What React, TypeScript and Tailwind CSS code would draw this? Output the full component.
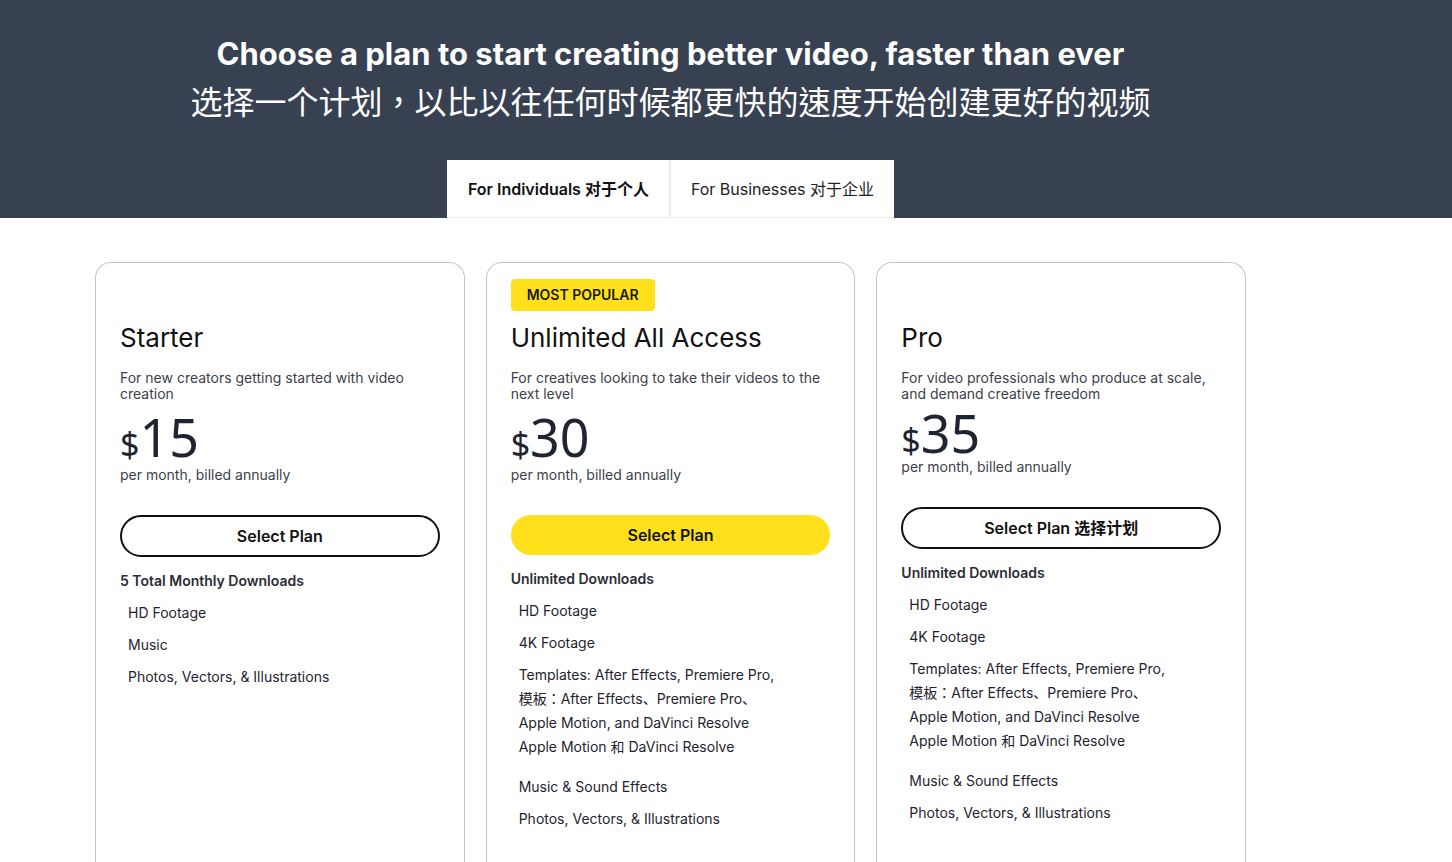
import React from "react";

type Plan = {
  name: string;
  description: string;
  price: string;
  badge?: string;
  buttonLabel: string;
  highlighted?: boolean;
  downloads: string;
  features: string[][];
};

const PLANS: Plan[] = [
  {
    name: "Starter",
    description: "For new creators getting started with video creation",
    price: "15",
    buttonLabel: "Select Plan",
    downloads: "5 Total Monthly Downloads",
    features: [["HD Footage"], ["Music"], ["Photos, Vectors, & Illustrations"]],
  },
  {
    name: "Unlimited All Access",
    description: "For creatives looking to take their videos to the next level",
    price: "30",
    badge: "MOST POPULAR",
    buttonLabel: "Select Plan",
    highlighted: true,
    downloads: "Unlimited Downloads",
    features: [
      ["HD Footage"],
      ["4K Footage"],
      [
        "Templates: After Effects, Premiere Pro,",
        "模板：After Effects、Premiere Pro、",
        "Apple Motion, and DaVinci Resolve",
        "Apple Motion 和 DaVinci Resolve",
      ],
      ["Music & Sound Effects"],
      ["Photos, Vectors, & Illustrations"],
    ],
  },
  {
    name: "Pro",
    description: "For video professionals who produce at scale, and demand creative freedom",
    price: "35",
    buttonLabel: "Select Plan 选择计划",
    downloads: "Unlimited Downloads",
    features: [
      ["HD Footage"],
      ["4K Footage"],
      [
        "Templates: After Effects, Premiere Pro,",
        "模板：After Effects、Premiere Pro、",
        "Apple Motion, and DaVinci Resolve",
        "Apple Motion 和 DaVinci Resolve",
      ],
      ["Music & Sound Effects"],
      ["Photos, Vectors, & Illustrations"],
    ],
  },
];

function PlanCard({ plan }: { plan: Plan }) {
  // the Pro card in the screenshot sits its "per month" line tight under the price
  const tight = plan.name === "Pro";
  return (
    <div className="h-[640px] rounded-t-2xl border border-b-0 border-[#c4c4c8] px-6 pt-4">
      <div className="h-8">
        {plan.badge && (
          <span className="inline-flex h-8 items-center rounded bg-[#ffe01b] px-4 text-sm font-semibold text-[#1a1a1a]">
            {plan.badge}
          </span>
        )}
      </div>
      <h3 className="mt-[10px] text-[26px] leading-[34px] text-[#111]">{plan.name}</h3>
      <p className="mt-[15px] text-sm leading-4 text-[#3d3f4a]">{plan.description}</p>
      <div
        className={`mt-[12px] flex items-baseline font-['Noto_Sans',sans-serif] text-[#1e2430] ${
          tight ? "leading-[38px]" : "leading-[46px]"
        }`}
      >
        <span className="text-[34px]">$</span>
        <span className="text-[52px]">{plan.price}</span>
      </div>
      <p className={`text-sm leading-4 text-[#3d3f4a] ${tight ? "mt-0" : "mt-0"}`}>
        per month, billed annually
      </p>
      <button
        className={`mt-8 flex w-full items-center justify-center rounded-full text-base font-semibold text-[#111] ${
          plan.highlighted ? "h-[40px] bg-[#ffe01b]" : "h-[42px] border-2 border-[#111] bg-white"
        }`}
      >
        {plan.buttonLabel}
      </button>
      <p className="mt-4 text-sm font-semibold leading-4 text-[#2a2d36]">{plan.downloads}</p>
      <ul className="mt-2 pl-2 font-['Inter','Noto_Sans_CJK_JP',sans-serif] text-sm text-[#1f2330]">
        {plan.features.map((group) => (
          <li key={group[0]} className={`py-2 leading-4 ${group.length > 1 ? "mb-2" : ""}`}>
            {group.map((line, i) => (
              <div key={line} className={i > 0 ? "mt-2" : ""}>
                {line}
              </div>
            ))}
          </li>
        ))}
      </ul>
    </div>
  );
}

export default function App() {
  return (
    <div className="min-h-[862px] bg-white font-['Inter','Noto_Sans_CJK_SC',sans-serif]">
      <header className="bg-[#374151]">
        <div className="ml-[95px] w-[1151px] pt-[34px] text-center text-white">
          <h1 className="text-[31px] font-bold leading-10">
            Choose a plan to start creating better video, faster than ever
          </h1>
          <h2 className="mt-[4px] font-['Noto_Sans_CJK_TC',sans-serif] text-[32px] leading-[44px]">
            选择一个计划，以比以往任何时候都更快的速度开始创建更好的视频
          </h2>
          <div className="mt-[38px] flex justify-center">
            <div className="flex gap-[2px] border-b border-[#ececec] bg-[#ececec]">
              <button className="flex h-[57px] items-center bg-white pl-[21px] pr-[20px] text-base font-semibold text-[#111]">
                For Individuals 对于个人
              </button>
              <button className="flex h-[57px] items-center bg-white px-[20px] text-base text-[#222]">
                For Businesses 对于企业
              </button>
            </div>
          </div>
        </div>
      </header>
      <main className="ml-[95px] mt-[44px] grid w-[1151px] grid-cols-3 gap-[21px]">
        {PLANS.map((plan) => (
          <PlanCard key={plan.name} plan={plan} />
        ))}
      </main>
    </div>
  );
}
